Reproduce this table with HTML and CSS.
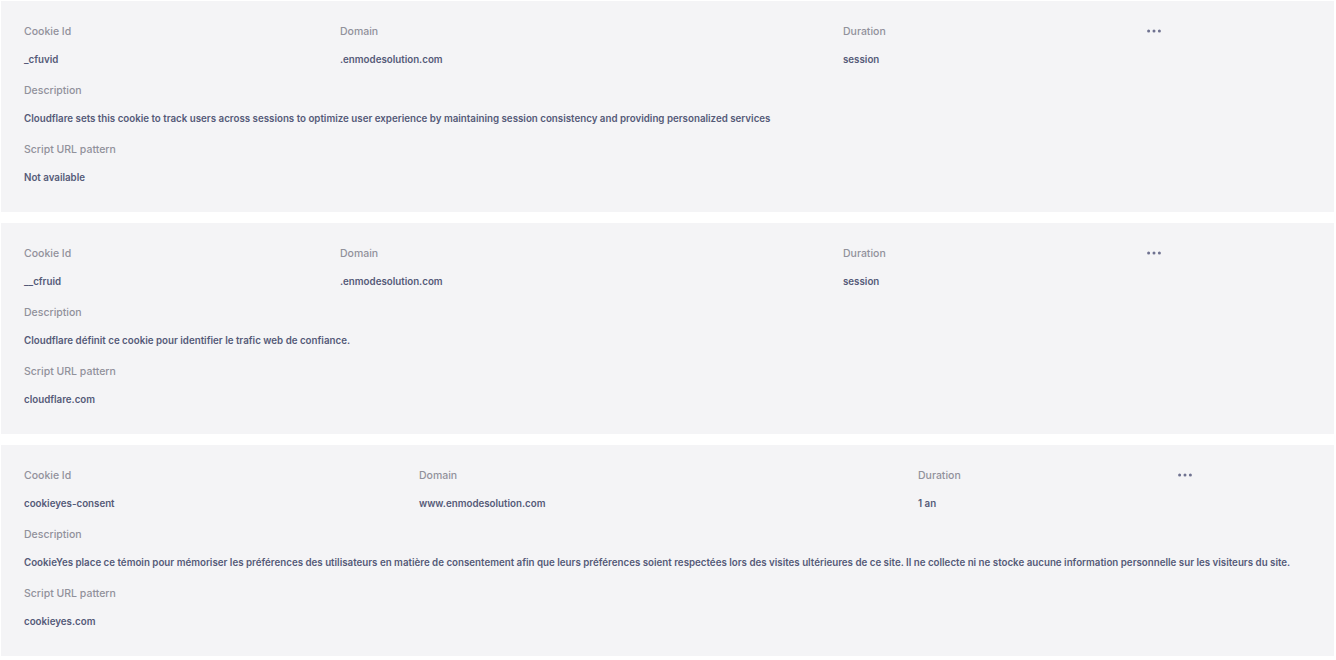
FILE: index.html
```html
<!DOCTYPE html>
<html lang="en">
<head>
<meta charset="utf-8">
<title>Cookies</title>
<link rel="stylesheet" href="styles.css">
</head>
<body>
<div class="list">
  <div class="card cols-a">
    <div class="lbl">Cookie Id</div>
    <div class="lbl">Domain</div>
    <div class="lbl">Duration</div>
    <div class="more"><svg width="14" height="4" viewBox="0 0 14 4"><circle cx="1.6" cy="2" r="1.5"/><circle cx="7" cy="2" r="1.5"/><circle cx="12.4" cy="2" r="1.5"/></svg></div>
    <div class="val">_cfuvid</div>
    <div class="val">.enmodesolution.com</div>
    <div class="val">session</div>
    <div class="val"></div>
    <div class="lbl full">Description</div>
    <div class="val full">Cloudflare sets this cookie to track users across sessions to optimize user experience by maintaining session consistency and providing personalized services</div>
    <div class="lbl full">Script URL pattern</div>
    <div class="val full">Not available</div>
  </div>
  <div class="card cols-a">
    <div class="lbl">Cookie Id</div>
    <div class="lbl">Domain</div>
    <div class="lbl">Duration</div>
    <div class="more"><svg width="14" height="4" viewBox="0 0 14 4"><circle cx="1.6" cy="2" r="1.5"/><circle cx="7" cy="2" r="1.5"/><circle cx="12.4" cy="2" r="1.5"/></svg></div>
    <div class="val">__cfruid</div>
    <div class="val">.enmodesolution.com</div>
    <div class="val">session</div>
    <div class="val"></div>
    <div class="lbl full">Description</div>
    <div class="val full">Cloudflare définit ce cookie pour identifier le trafic web de confiance.</div>
    <div class="lbl full">Script URL pattern</div>
    <div class="val full">cloudflare.com</div>
  </div>
  <div class="card cols-b">
    <div class="lbl">Cookie Id</div>
    <div class="lbl">Domain</div>
    <div class="lbl">Duration</div>
    <div class="more"><svg width="14" height="4" viewBox="0 0 14 4"><circle cx="1.6" cy="2" r="1.5"/><circle cx="7" cy="2" r="1.5"/><circle cx="12.4" cy="2" r="1.5"/></svg></div>
    <div class="val">cookieyes-consent</div>
    <div class="val">www.enmodesolution.com</div>
    <div class="val">1 an</div>
    <div class="val"></div>
    <div class="lbl full">Description</div>
    <div class="val full">CookieYes place ce témoin pour mémoriser les préférences des utilisateurs en matière de consentement afin que leurs préférences soient respectées lors des visites ultérieures de ce site. Il ne collecte ni ne stocke aucune information personnelle sur les visiteurs du site.</div>
    <div class="lbl full">Script URL pattern</div>
    <div class="val full">cookieyes.com</div>
  </div>
</div>
</body>
</html>
```
FILE: styles.css
```css
html, body {
  margin: 0;
  padding: 0;
  background: #ffffff;
}
body {
  font-family: Inter, "Noto Sans", "Liberation Sans", sans-serif;
}
.list {
  display: flex;
  flex-direction: column;
  gap: 11px;
  padding: 1px 2px 0 1px;
}
.card {
  background: #f4f4f6;
  display: grid;
  padding: 15px 24px 19px 23px;
  grid-auto-rows: auto;
}
.cols-a {
  grid-template-columns: 316px 503px 304px 1fr;
}
.cols-b {
  grid-template-columns: 395px 499px 260px 1fr;
}
.lbl {
  height: 29px;
  line-height: 31px;
  font-size: 10.5px;
  font-weight: 500;
  color: #91919b;
  white-space: nowrap;
}
.val {
  height: 30px;
  line-height: 29px;
  font-size: 9.75px;
  font-weight: 600;
  color: #555a78;
  white-space: nowrap;
}
.full {
  grid-column: 1 / -1;
}
.more {
  height: 29px;
  display: flex;
  align-items: center;
}
.more svg {
  display: block;
  fill: #6f7290;
}
```
